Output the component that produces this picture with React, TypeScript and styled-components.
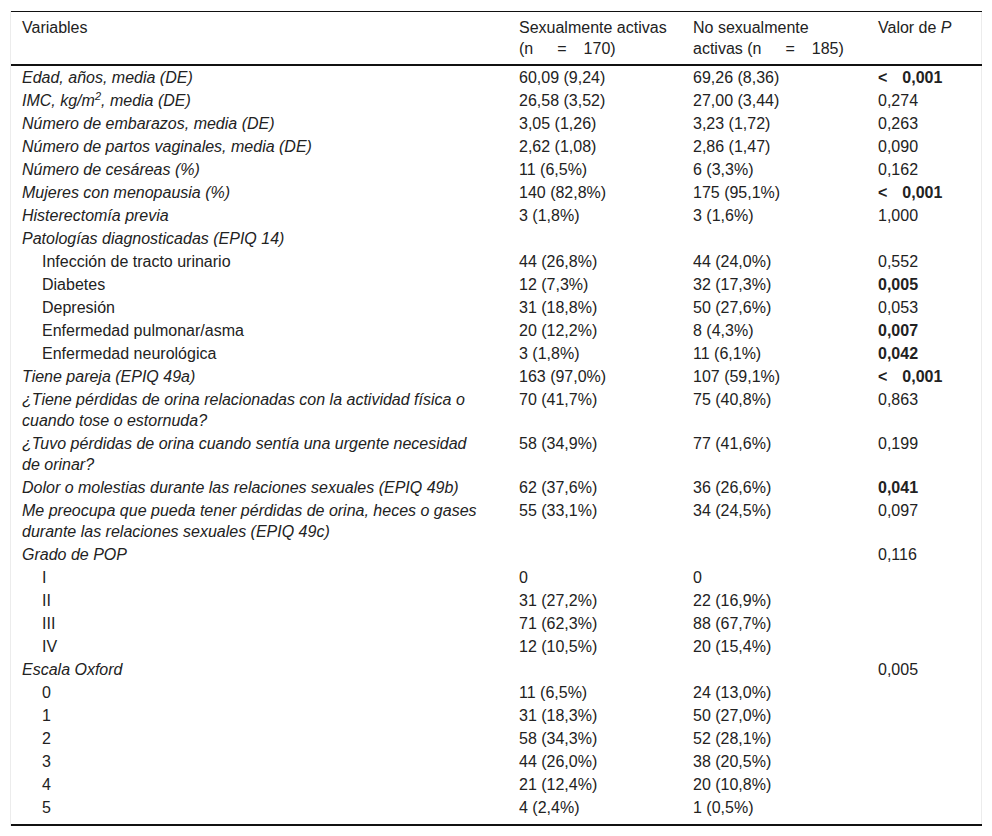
import React from 'react'
import styled, { createGlobalStyle } from 'styled-components'

const GlobalStyle = createGlobalStyle`
    body {
        margin: 0;
        background: #ffffff;
        font-family: "Liberation Sans", Arial, sans-serif;
        color: #222222;
    }
`

type Row = {
    label: React.ReactNode
    a: string
    b: string
    p?: string
    bold?: boolean
    less?: boolean
    italic?: boolean
    indent?: boolean
}

const rows: Row[] = [
    { label: 'Edad, años, media (DE)', a: '60,09 (9,24)', b: '69,26 (8,36)', p: '0,001', bold: true, less: true, italic: true },
    { label: <>IMC, kg/m<sup>2</sup>, media (DE)</>, a: '26,58 (3,52)', b: '27,00 (3,44)', p: '0,274', italic: true },
    { label: 'Número de embarazos, media (DE)', a: '3,05 (1,26)', b: '3,23 (1,72)', p: '0,263', italic: true },
    { label: 'Número de partos vaginales, media (DE)', a: '2,62 (1,08)', b: '2,86 (1,47)', p: '0,090', italic: true },
    { label: 'Número de cesáreas (%)', a: '11 (6,5%)', b: '6 (3,3%)', p: '0,162', italic: true },
    { label: 'Mujeres con menopausia (%)', a: '140 (82,8%)', b: '175 (95,1%)', p: '0,001', bold: true, less: true, italic: true },
    { label: 'Histerectomía previa', a: '3 (1,8%)', b: '3 (1,6%)', p: '1,000', italic: true },
    { label: 'Patologías diagnosticadas (EPIQ 14)', a: '', b: '', italic: true },
    { label: 'Infección de tracto urinario', a: '44 (26,8%)', b: '44 (24,0%)', p: '0,552', indent: true },
    { label: 'Diabetes', a: '12 (7,3%)', b: '32 (17,3%)', p: '0,005', bold: true, indent: true },
    { label: 'Depresión', a: '31 (18,8%)', b: '50 (27,6%)', p: '0,053', indent: true },
    { label: 'Enfermedad pulmonar/asma', a: '20 (12,2%)', b: '8 (4,3%)', p: '0,007', bold: true, indent: true },
    { label: 'Enfermedad neurológica', a: '3 (1,8%)', b: '11 (6,1%)', p: '0,042', bold: true, indent: true },
    { label: 'Tiene pareja (EPIQ 49a)', a: '163 (97,0%)', b: '107 (59,1%)', p: '0,001', bold: true, less: true, italic: true },
    { label: <>¿Tiene pérdidas de orina relacionadas con la actividad física o<br />cuando tose o estornuda?</>, a: '70 (41,7%)', b: '75 (40,8%)', p: '0,863', italic: true },
    { label: <>¿Tuvo pérdidas de orina cuando sentía una urgente necesidad<br />de orinar?</>, a: '58 (34,9%)', b: '77 (41,6%)', p: '0,199', italic: true },
    { label: 'Dolor o molestias durante las relaciones sexuales (EPIQ 49b)', a: '62 (37,6%)', b: '36 (26,6%)', p: '0,041', bold: true, italic: true },
    { label: <>Me preocupa que pueda tener pérdidas de orina, heces o gases<br />durante las relaciones sexuales (EPIQ 49c)</>, a: '55 (33,1%)', b: '34 (24,5%)', p: '0,097', italic: true },
    { label: 'Grado de POP', a: '', b: '', p: '0,116', italic: true },
    { label: 'I', a: '0', b: '0', indent: true },
    { label: 'II', a: '31 (27,2%)', b: '22 (16,9%)', indent: true },
    { label: 'III', a: '71 (62,3%)', b: '88 (67,7%)', indent: true },
    { label: 'IV', a: '12 (10,5%)', b: '20 (15,4%)', indent: true },
    { label: 'Escala Oxford', a: '', b: '', p: '0,005', italic: true },
    { label: '0', a: '11 (6,5%)', b: '24 (13,0%)', indent: true },
    { label: '1', a: '31 (18,3%)', b: '50 (27,0%)', indent: true },
    { label: '2', a: '58 (34,3%)', b: '52 (28,1%)', indent: true },
    { label: '3', a: '44 (26,0%)', b: '38 (20,5%)', indent: true },
    { label: '4', a: '21 (12,4%)', b: '20 (10,8%)', indent: true },
    { label: '5', a: '4 (2,4%)', b: '1 (0,5%)', indent: true },
]

const App: React.FC = () => {
    return (
        <Page>
            <GlobalStyle />
            <Frame>
                <Table>
                    <colgroup>
                        <col style={{ width: '496px' }} />
                        <col style={{ width: '174px' }} />
                        <col style={{ width: '185px' }} />
                        <col style={{ width: '116px' }} />
                    </colgroup>
                    <thead>
                        <tr>
                            <Th $first>Variables</Th>
                            <Th>
                                Sexualmente activas<br />
                                (n<Eq>=</Eq>170)
                            </Th>
                            <Th>
                                No sexualmente<br />
                                activas (n<Eq>=</Eq>185)
                            </Th>
                            <Th>Valor de <i>P</i></Th>
                        </tr>
                    </thead>
                    <tbody>
                        {rows.map((r, i) => (
                            <tr key={i}>
                                <Label $italic={r.italic} $indent={r.indent}>{r.label}</Label>
                                <Td>{r.a}</Td>
                                <Td>{r.b}</Td>
                                <Td $bold={r.bold}>
                                    {r.less && <Less>&lt;</Less>}
                                    {r.p}
                                </Td>
                            </tr>
                        ))}
                    </tbody>
                </Table>
            </Frame>
        </Page>
    )
}

const Page = styled.div`
    padding: 11px 10px 0 10px;
    width: 972px;
`
const Frame = styled.div`
    border-left: 1px solid #ececec;
    border-right: 1px solid #ececec;
`
const Table = styled.table`
    width: 100%;
    border-collapse: collapse;
    table-layout: fixed;
    font-size: 16px;
    line-height: 21px;
    border-top: 1px solid #111111;
    border-bottom: 2px solid #111111;
    & tbody tr:last-child td {
        padding-bottom: 6px;
    }
`
const Th = styled.th<{ $first?: boolean }>`
    text-align: left;
    vertical-align: top;
    font-weight: normal;
    padding: 5px 8px 5px ${p => (p.$first ? 11 : 12)}px;
    border-bottom: 2px solid #111111;
    & i {
        font-style: italic;
    }
`
const Eq = styled.span`
    margin: 0 17px 0 24px;
`
const Td = styled.td<{ $bold?: boolean }>`
    vertical-align: top;
    padding: 1px 8px 1px 12px;
    font-weight: ${p => (p.$bold ? 700 : 400)};
    white-space: nowrap;
`
const Label = styled.td<{ $italic?: boolean; $indent?: boolean }>`
    vertical-align: top;
    padding: 1px 8px 1px ${p => (p.$indent ? 31 : 11)}px;
    font-style: ${p => (p.$italic ? 'italic' : 'normal')};
    & sup {
        font-size: 11px;
        line-height: 0;
        vertical-align: 6px;
    }
`
const Less = styled.span`
    margin-right: 15px;
`

export default App
